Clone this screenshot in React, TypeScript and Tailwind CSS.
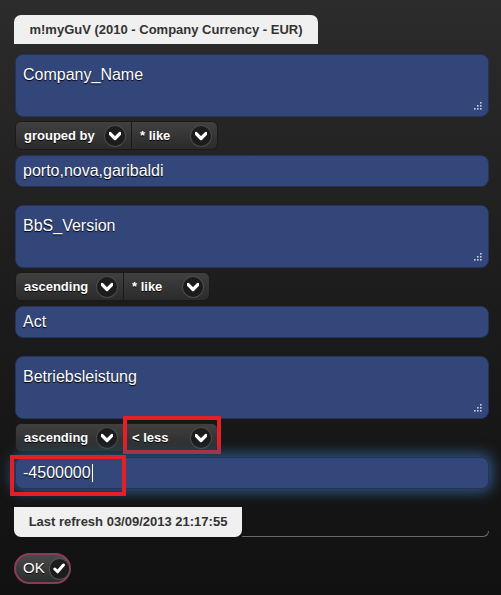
import React from "react";

const font = { fontFamily: '"Liberation Sans", Arial, sans-serif' };

function Chev() {
  return (
    <span className="flex h-[20px] w-[20px] items-center justify-center rounded-full bg-[#1c1c1c] shadow-[0_0_0_1px_#4a4a4a]">
      <svg width="12" height="10" viewBox="0 0 12 10">
        <path d="M1 2.5 L6 7.5 L11 2.5" fill="none" stroke="#fff" strokeWidth="3.2" strokeLinecap="round" strokeLinejoin="round" />
      </svg>
    </span>
  );
}

function Seg({ label, w, first, last, children }: { label: string; w: number; first?: boolean; last?: boolean; children?: React.ReactNode }) {
  return (
    <div
      className={`relative flex h-[29px] items-center justify-between bg-gradient-to-b from-[#404040] to-[#2b2b2b] border border-[#1a1a1a] pl-[8px] pr-[6px] ${first ? "rounded-l-[6px]" : ""} ${last ? "rounded-r-[6px] border-l-0" : ""}`}
      style={{ width: w }}
    >
      <span className="text-[13px] font-bold text-white [text-shadow:0_1px_0_#000]">{label}</span>
      <Chev />
      {children}
    </div>
  );
}

function Area({ text }: { text: string }) {
  return (
    <div className="relative h-[63px] rounded-[8px] border border-[#25335a] bg-[#33467a] px-[7px] pt-[8px] text-[16px] text-white [text-shadow:0_1px_1px_#000]">
      {text}
      <svg className="absolute bottom-[5px] right-[6px]" width="10" height="10" viewBox="0 0 10 10">
        {[[8, 1], [5, 4], [8, 4], [2, 7], [5, 7], [8, 7]].map(([x, y], i) => (
          <rect key={i} x={x} y={y} width="1.6" height="1.6" fill="#c8d0e4" />
        ))}
      </svg>
    </div>
  );
}

function Input({ text, glow, children }: { text: string; glow?: boolean; children?: React.ReactNode }) {
  return (
    <div
      className={`relative flex h-[32px] items-center rounded-[8px] border border-[#25335a] bg-[#34477a] px-[7px] text-[16px] text-white [text-shadow:0_1px_1px_#000] ${glow ? "shadow-[0_0_14px_3px_#2e5a8a]" : ""}`}
    >
      {text}
      {children}
    </div>
  );
}

export default function App() {
  return (
    <div style={font} className="h-[595px] w-[501px] overflow-hidden bg-gradient-to-b from-[#2c2c2c] via-[#1c1c1c] to-[#111111]">
      <div className="flex flex-col px-[15px] pt-[15px] pr-[12px]">
        <div className="ml-[-1px] flex h-[29px] w-[304px] items-center justify-center rounded-t-[7px] bg-[#f0f0f0] text-[13px] font-bold text-[#333]">
          m!myGuV (2010 - Company Currency - EUR)
        </div>
        <div className="mt-[10px]">
          <Area text="Company_Name" />
        </div>
        <div className="mt-[4px] flex">
          <Seg label="grouped by" w={117} first />
          <Seg label="* like" w={86} last />
        </div>
        <div className="mt-[5px]">
          <Input text="porto,nova,garibaldi" />
        </div>

        <div className="mt-[18px]">
          <Area text="BbS_Version" />
        </div>
        <div className="mt-[4px] flex">
          <Seg label="ascending" w={109} first />
          <Seg label="* like" w={86} last />
        </div>
        <div className="mt-[5px]">
          <Input text="Act" />
        </div>

        <div className="mt-[18px]">
          <Area text="Betriebsleistung" />
        </div>
        <div className="mt-[4px] flex">
          <Seg label="ascending" w={109} first />
          <Seg label="< less" w={94} last>
            <div className="pointer-events-none absolute left-[-1px] right-[-4px] top-[-8px] bottom-[-3px] border-[4px] border-[#e3202a]" />
          </Seg>
        </div>
        <div className="mt-[5px]">
          <Input text="-4500000" glow>
            <span className="ml-[1px] inline-block h-[18px] w-[1px] bg-white" />
            <div className="pointer-events-none absolute left-[-6px] top-[-3px] h-[41px] w-[116px] border-[4px] border-[#e3202a]" />
          </Input>
        </div>

        <div className="mt-[18px] flex items-end">
          <div className="ml-[-1px] flex h-[30px] w-[228px] items-center justify-center rounded-b-[7px] bg-[#f0f0f0] text-[13px] font-bold text-[#333]">
            Last refresh 03/09/2013 21:17:55
          </div>
          <div className="h-[6px] flex-1 rounded-br-[6px] border-b border-r border-[#6a6a6a]" />
        </div>

        <div className="mt-[16px] ml-[-1px] flex h-[31px] w-[57px] items-center gap-[5px] rounded-full border-2 border-[#8a3a5c] bg-gradient-to-b from-[#4a4a4a] to-[#2c2c2c] pl-[7px]">
          <span className="text-[15px] text-white [text-shadow:0_1px_0_#000]">OK</span>
          <span className="flex h-[20px] w-[20px] items-center justify-center rounded-full bg-[#1c1c1c] shadow-[0_0_0_1px_#555]">
            <svg width="12" height="11" viewBox="0 0 12 11">
              <path d="M1.8 6 L4.6 8.8 L10.4 2" fill="none" stroke="#fff" strokeWidth="3" strokeLinecap="round" strokeLinejoin="round" />
            </svg>
          </span>
        </div>
      </div>
    </div>
  );
}
